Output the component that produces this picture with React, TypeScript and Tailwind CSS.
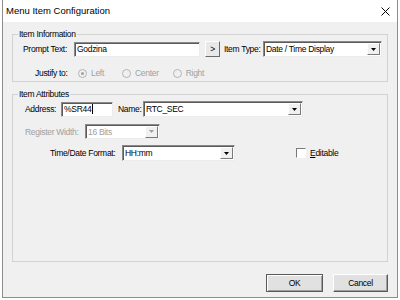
const field =
  'bg-white border border-t-[#8a8a8a] border-l-[#8a8a8a] border-b-[#ececec] border-r-[#ececec] shadow-[inset_1px_1px_0_#5a5a5a] shrink-0'

function DropArrow({ disabled }: { disabled?: boolean }) {
  return (
    <div className="ml-auto mr-[1px] flex h-[12px] w-[13px] shrink-0 items-center justify-center border border-t-white border-l-white border-b-[#7a7a7a] border-r-[#7a7a7a] bg-[#f0f0f0]">
      <svg width="5" height="3" viewBox="0 0 5 3">
        <path d="M0 0h5L2.5 3z" fill={disabled ? '#a0a0a0' : '#000'} />
      </svg>
    </div>
  )
}

function Select({ value, w, h = 'h-[16px]', disabled }: { value: string; w: string; h?: string; disabled?: boolean }) {
  return (
    <div className={`${field} ${w} ${h} flex items-center pl-[2px] ${disabled ? 'bg-[#f0f0f0] text-[#a0a0a0]' : ''}`}>
      <span className="whitespace-nowrap">{value}</span>
      <DropArrow disabled={disabled} />
    </div>
  )
}

function Radio({ label, x }: { label: string; x: string }) {
  return (
    <div className={`flex shrink-0 items-center ${x}`}>
      <div className="flex h-[9px] w-[9px] items-center justify-center rounded-full border border-[#b5b5b5] bg-[#f0f0f0]">
        {label === 'Left' && <div className="h-[3px] w-[3px] rounded-full bg-[#a0a0a0]" />}
      </div>
      <span className="ml-[4px] whitespace-nowrap text-[#a0a0a0]">{label}</span>
    </div>
  )
}

export default function App() {
  return (
    <div className="h-[300px] w-[400px] bg-white font-['Liberation_Sans',Arial,sans-serif] text-[8.5px] leading-[12px] tracking-[-0.3px] text-black">
      <div className="ml-[2px] flex h-[298px] w-[396px] flex-col border border-t-0 border-[#8c8c8c] bg-[#f0f0f0]">
        <div className="flex h-[22px] items-center justify-between bg-white pl-[3px] pr-[7px]">
          <span className="text-[9.5px] tracking-normal">Menu Item Configuration</span>
          <svg width="9" height="9" viewBox="0 0 9 9">
            <path d="M0.5 0.5l8 8M8.5 0.5l-8 8" stroke="#000" strokeWidth="1" />
          </svg>
        </div>

        <div className="flex flex-1 flex-col px-[9px]">
          <fieldset className="mt-[6px] border border-[#d3d3d3] px-0 pb-[2px]">
            <legend className="ml-[5px] px-[1px] leading-[12px]">Item Information</legend>
            <div className="mt-[1px] flex h-[16px] items-center pl-[10px]">
              <span className="w-[51px] shrink-0 whitespace-nowrap">Prompt Text:</span>
              <div className={`${field} flex h-[15px] w-[126px] items-center pl-[2px]`}>Godzina</div>
              <div className="ml-[5px] flex h-[16px] w-[15px] shrink-0 items-center justify-center border border-t-white border-l-white border-b-[#6a6a6a] border-r-[#6a6a6a] bg-[#e8e8e8]">
                &gt;
              </div>
              <span className="ml-[4px] w-[39px] shrink-0 whitespace-nowrap">Item Type:</span>
              <Select value="Date / Time Display" w="w-[119px]" />
            </div>
            <div className="mt-[10px] flex h-[12px] items-center pl-[22px]">
              <span className="w-[43px] shrink-0 whitespace-nowrap">Justify to:</span>
              <Radio label="Left" x="" />
              <Radio label="Center" x="ml-[18px]" />
              <Radio label="Right" x="ml-[14px]" />
            </div>
          </fieldset>

          <fieldset className="mt-[6px] h-[174px] border border-[#d3d3d3] px-0">
            <legend className="ml-[5px] px-[1px] leading-[12px]">Item Attributes</legend>
            <div className="mt-[1px] flex h-[16px] items-center pl-[12px]">
              <span className="w-[36px] shrink-0 whitespace-nowrap">Address:</span>
              <div className={`${field} flex h-[15px] w-[52px] items-center pl-[2px]`}>
                %SR44<span className="ml-[1px] inline-block h-[10px] w-px bg-black" />
              </div>
              <span className="ml-[5px] w-[25px] shrink-0 whitespace-nowrap">Name:</span>
              <Select value="RTC_SEC" w="w-[160px]" />
            </div>
            <div className="mt-[7px] flex h-[15px] items-center pl-[12px]">
              <span className="w-[60px] shrink-0 whitespace-nowrap text-[#a0a0a0]">Register Width:</span>
              <Select value="16 Bits" w="w-[75px]" h="h-[15px]" disabled />
            </div>
            <div className="mt-[6px] flex h-[16px] items-center pl-[37px]">
              <span className="w-[72px] shrink-0 whitespace-nowrap">Time/Date Format:</span>
              <Select value="HH:mm" w="w-[113px]" />
              <div className="ml-[61px] h-[10px] w-[10px] shrink-0 border border-t-[#7a7a7a] border-l-[#7a7a7a] border-b-white border-r-white bg-white" />
              <span className="ml-[4px] whitespace-nowrap">
                <span className="underline">E</span>ditable
              </span>
            </div>
          </fieldset>

          <div className="mt-[12px] flex justify-end">
            <div className="flex h-[18px] w-[57px] items-center justify-center border border-[#5a5a5a] bg-[#e1e1e1] shadow-[inset_1px_1px_0_#fff,inset_-1px_-1px_0_#a0a0a0]">
              OK
            </div>
            <div className="ml-[10px] flex h-[18px] w-[55px] items-center justify-center border border-t-white border-l-white border-b-[#5a5a5a] border-r-[#5a5a5a] bg-[#e1e1e1] shadow-[inset_-1px_-1px_0_#a0a0a0]">
              Cancel
            </div>
          </div>
        </div>
      </div>
    </div>
  )
}
